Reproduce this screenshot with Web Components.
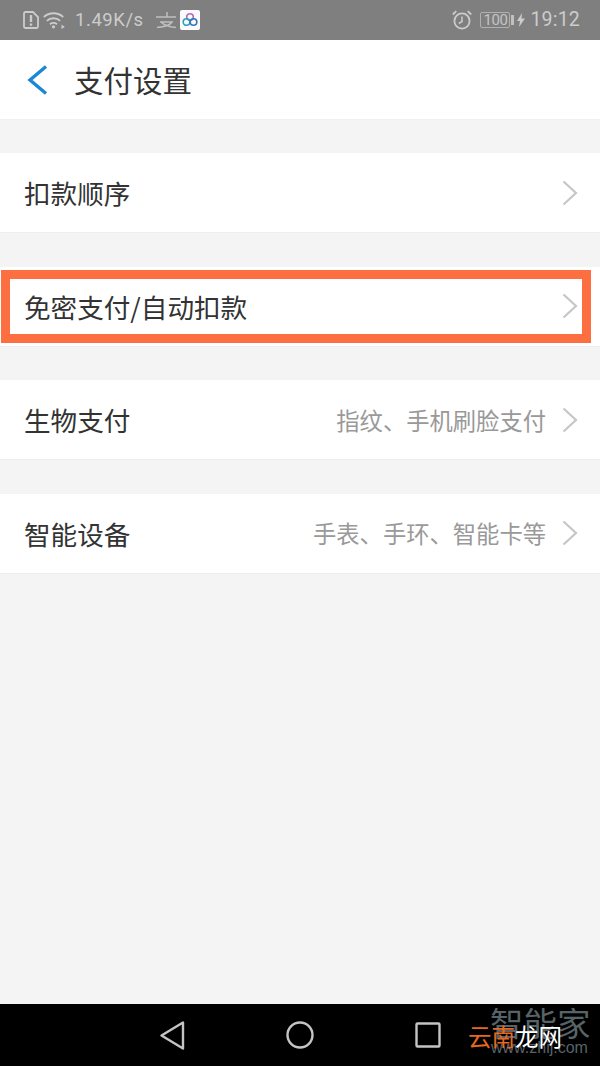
<!DOCTYPE html>
<html lang="zh">
<head>
<meta charset="utf-8">
<title>支付设置</title>
<style>
  html, body { margin: 0; padding: 0; }
  body {
    width: 600px;
    height: 1066px;
    overflow: hidden;
    background: #f4f4f4;
    font-family: "Noto Sans CJK SC", "Noto Sans", sans-serif;
  }
  #app { display: flex; flex-direction: column; height: 1066px; position: relative; }
  #rows { flex: 1; display: flex; flex-direction: column; padding-top: 33px; gap: 33.5px; }
</style>
</head>
<body>
<div id="app">
  <status-bar></status-bar>
  <title-bar>支付设置</title-bar>
  <div id="rows">
    <setting-row>扣款顺序</setting-row>
    <setting-row highlighted>免密支付/自动扣款</setting-row>
    <setting-row>生物支付<span slot="hint">指纹、手机刷脸支付</span></setting-row>
    <setting-row>智能设备<span slot="hint">手表、手环、智能卡等</span></setting-row>
  </div>
  <nav-bar></nav-bar>
  <water-mark></water-mark>
</div>

<script>
  class StatusBar extends HTMLElement {
    constructor() {
      super();
      var sh = this.attachShadow({ mode: "open" });
      sh.innerHTML = `
        <style>
          :host {
            display: flex;
            flex: none;
            height: 40px;
            box-sizing: border-box;
            padding: 0 20px 0 23px;
            align-items: center;
            justify-content: space-between;
            background: #7f7f7f;
            color: #cccccc;
            font: 18.5px/1 Roboto, "Liberation Sans", sans-serif;
          }
          .side { display: flex; align-items: center; }
          svg { display: block; flex: none; }
          .speed { margin-left: 10px; width: 70px; white-space: nowrap; letter-spacing: .55px; }
          .batt { width: 30px; height: 16px; box-sizing: border-box; border: 1px solid #b0b0b0; border-radius: 2px;
                  font-size: 15px; line-height: 14px; text-align: center; margin-left: 8px; letter-spacing: -.4px; color: #c4c4c4; }
          .time { margin-left: 5px; font-size: 19.5px; letter-spacing: .2px; }
        </style>
        <div class="side">
          <svg width="16" height="18" viewBox="0 0 16 18" fill="none">
            <path d="M2.500 1h7.500l5 5v9.500a1.500 1.500 0 0 1-1.500 1.500h-11A1.500 1.500 0 0 1 1 15.500v-13A1.500 1.500 0 0 1 2.500 1z" stroke="#cccccc" stroke-width="1.800"/>
            <path d="M8 4v7M8 12.500v2.200" stroke="#cccccc" stroke-width="2.400"/>
          </svg>
          <svg style="margin-left:4px" width="22" height="18" viewBox="0 0 22 18" fill="none" stroke="#cccccc" stroke-width="1.800">
            <path d="M.8 6C6 1 15 1 20.200 6"/>
            <path d="M3.800 9.800c3.600-3.400 9.800-3.400 13.400 0"/>
            <path d="M7 13.200c1.900-1.600 5.100-1.600 7 0"/>
            <circle cx="10.500" cy="15.800" r="1.600" fill="#cccccc" stroke="none"/>
            <path d="M18.500 13.500 21.800 16l-3.300 2z" fill="#cccccc" stroke="none"/>
          </svg>
          <span class="speed">1.49K/s</span>
          <svg style="margin-left:10px" width="22" height="16" viewBox="0 0 22 16" fill="none" stroke="#c0c0c0" stroke-width="1.500">
            <path d="M1 5h20M12 0v5M5 10h12c-2 3-8 5-15 5.500M6 10c3 3 9 5 15 5.500"/>
          </svg>
          <svg style="margin-left:3px" width="20" height="20" viewBox="0 0 20 20" fill="none">
            <rect width="20" height="20" rx="2" fill="#fbfbfb"/>
            <circle cx="10" cy="7" r="3.300" stroke="#b968b4" stroke-width="1.600"/>
            <circle cx="6.500" cy="12" r="3.300" stroke="#2f9fc0" stroke-width="1.600"/>
            <circle cx="13.500" cy="12" r="3.300" stroke="#2f78b8" stroke-width="1.600"/>
          </svg>
        </div>
        <div class="side">
          <svg width="20" height="20" viewBox="0 0 20 20" fill="none" stroke="#cccccc">
            <circle cx="10" cy="11" r="7.600" stroke-width="1.800"/>
            <path d="M10 6.500V11.500L6.800 13.500" stroke-width="1.500"/>
            <path d="M.8 4.500 4.300 1.200M19.200 4.500 15.700 1.200" stroke-width="1.800"/>
          </svg>
          <div class="batt">100</div>
          <svg style="margin-left:1px" width="3" height="10" viewBox="0 0 3 10"><rect width="3" height="10" fill="#c0c0c0"/></svg>
          <svg style="margin-left:3px" width="8" height="14" viewBox="0 0 8 14"><path d="M5 0 0 8h3l-1 6 6-8.500H4.500z" fill="#cccccc"/></svg>
          <span class="time">19:12</span>
        </div>
      `;
    }
  }

  class TitleBar extends HTMLElement {
    constructor() {
      super();
      var sh = this.attachShadow({ mode: "open" });
      sh.innerHTML = `
        <style>
          :host {
            display: flex;
            flex: none;
            height: 80px;
            box-sizing: border-box;
            padding-left: 27px;
            align-items: center;
            background: #fff;
            color: #333;
            font-size: 29.500px;
            border-bottom: 1px solid #f0f0f0;
          }
          svg { display: block; }
          .label { margin-left: 26px; line-height: 40px; padding-bottom: 2px; }
        </style>
        <svg width="21" height="30" viewBox="0 0 21 30" fill="none">
          <path d="M19 1.500 3 15l16 13.500" stroke="#1b87d6" stroke-width="3.400"/>
        </svg>
        <span class="label"><slot></slot></span>
      `;
    }
  }

  class SettingRow extends HTMLElement {
    constructor() {
      super();
      var sh = this.attachShadow({ mode: "open" });
      sh.innerHTML = `
        <style>
          :host {
            display: flex;
            flex: none;
            position: relative;
            height: 80px;
            box-sizing: border-box;
            padding: 0 22px 0 24px;
            align-items: center;
            background: #fff;
            color: #333;
            font-size: 26.600px;
            border-bottom: 1px solid #eeeeee;
          }
          .label { flex: 1; white-space: nowrap; }
          .hint { color: #999; font-size: 23.300px; margin-right: 16px; white-space: nowrap; }
          svg { display: block; flex: none; }
          .mark {
            display: none;
            position: absolute;
            left: 1px;
            top: 3.500px;
            width: 590px;
            height: 73px;
            box-sizing: border-box;
            border: 9px solid #fd6f41;
          }
          :host([highlighted]) .mark { display: block; }
        </style>
        <span class="label"><slot></slot></span>
        <span class="hint"><slot name="hint"></slot></span>
        <svg width="16" height="26" viewBox="0 0 16 26" fill="none">
          <path d="M1.500 1.500 14 13 1.500 24.500" stroke="#c6c6c6" stroke-width="2.200"/>
        </svg>
        <div class="mark"></div>
      `;
    }
  }

  class NavBar extends HTMLElement {
    constructor() {
      super();
      var sh = this.attachShadow({ mode: "open" });
      sh.innerHTML = `
        <style>
          :host {
            display: flex;
            flex: none;
            height: 62px;
            box-sizing: border-box;
            padding: 0 159px 0 160px;
            align-items: center;
            justify-content: space-between;
            background: #000;
          }
          svg { display: block; }
        </style>
        <svg width="25" height="29" viewBox="0 0 25 29" fill="none" stroke="#c4c4c4" stroke-width="2.400" stroke-linejoin="round">
          <path d="M23 1.500V27.500L1.500 14.500z"/>
        </svg>
        <svg width="28" height="28" viewBox="0 0 28 28" fill="none" stroke="#c4c4c4" stroke-width="2.400">
          <circle cx="14" cy="14" r="12.500"/>
        </svg>
        <svg width="26" height="26" viewBox="0 0 26 26" fill="none" stroke="#c4c4c4" stroke-width="2.400" stroke-linejoin="round">
          <rect x="1.500" y="1.500" width="23" height="23" rx="1"/>
        </svg>
      `;
    }
  }

  class WaterMark extends HTMLElement {
    constructor() {
      super();
      var sh = this.attachShadow({ mode: "open" });
      sh.innerHTML = `
        <style>
          :host {
            display: block;
            position: absolute;
            left: 466px;
            top: 1004px;
            width: 134px;
            height: 62px;
          }
          div { position: absolute; white-space: nowrap; line-height: 1; }
          .back { left: 24px; top: 1px; font-size: 33.500px; color: #566468; }
          .url { left: 25px; top: 36px; font: 16px/1 "Liberation Sans", sans-serif; color: #56626a; }
          .front { left: 2px; top: 21px; font-size: 23.500px; }
          .front span:first-child { color: #e8681e; }
          .front span:last-child { color: #fff; }
        </style>
        <div class="back">智能家</div>
        <div class="url">www.zhij.com</div>
        <div class="front"><span>云南</span><span>龙网</span></div>
      `;
    }
  }

  customElements.define("status-bar", StatusBar);
  customElements.define("title-bar", TitleBar);
  customElements.define("setting-row", SettingRow);
  customElements.define("nav-bar", NavBar);
  customElements.define("water-mark", WaterMark);
</script>
</body>
</html>
